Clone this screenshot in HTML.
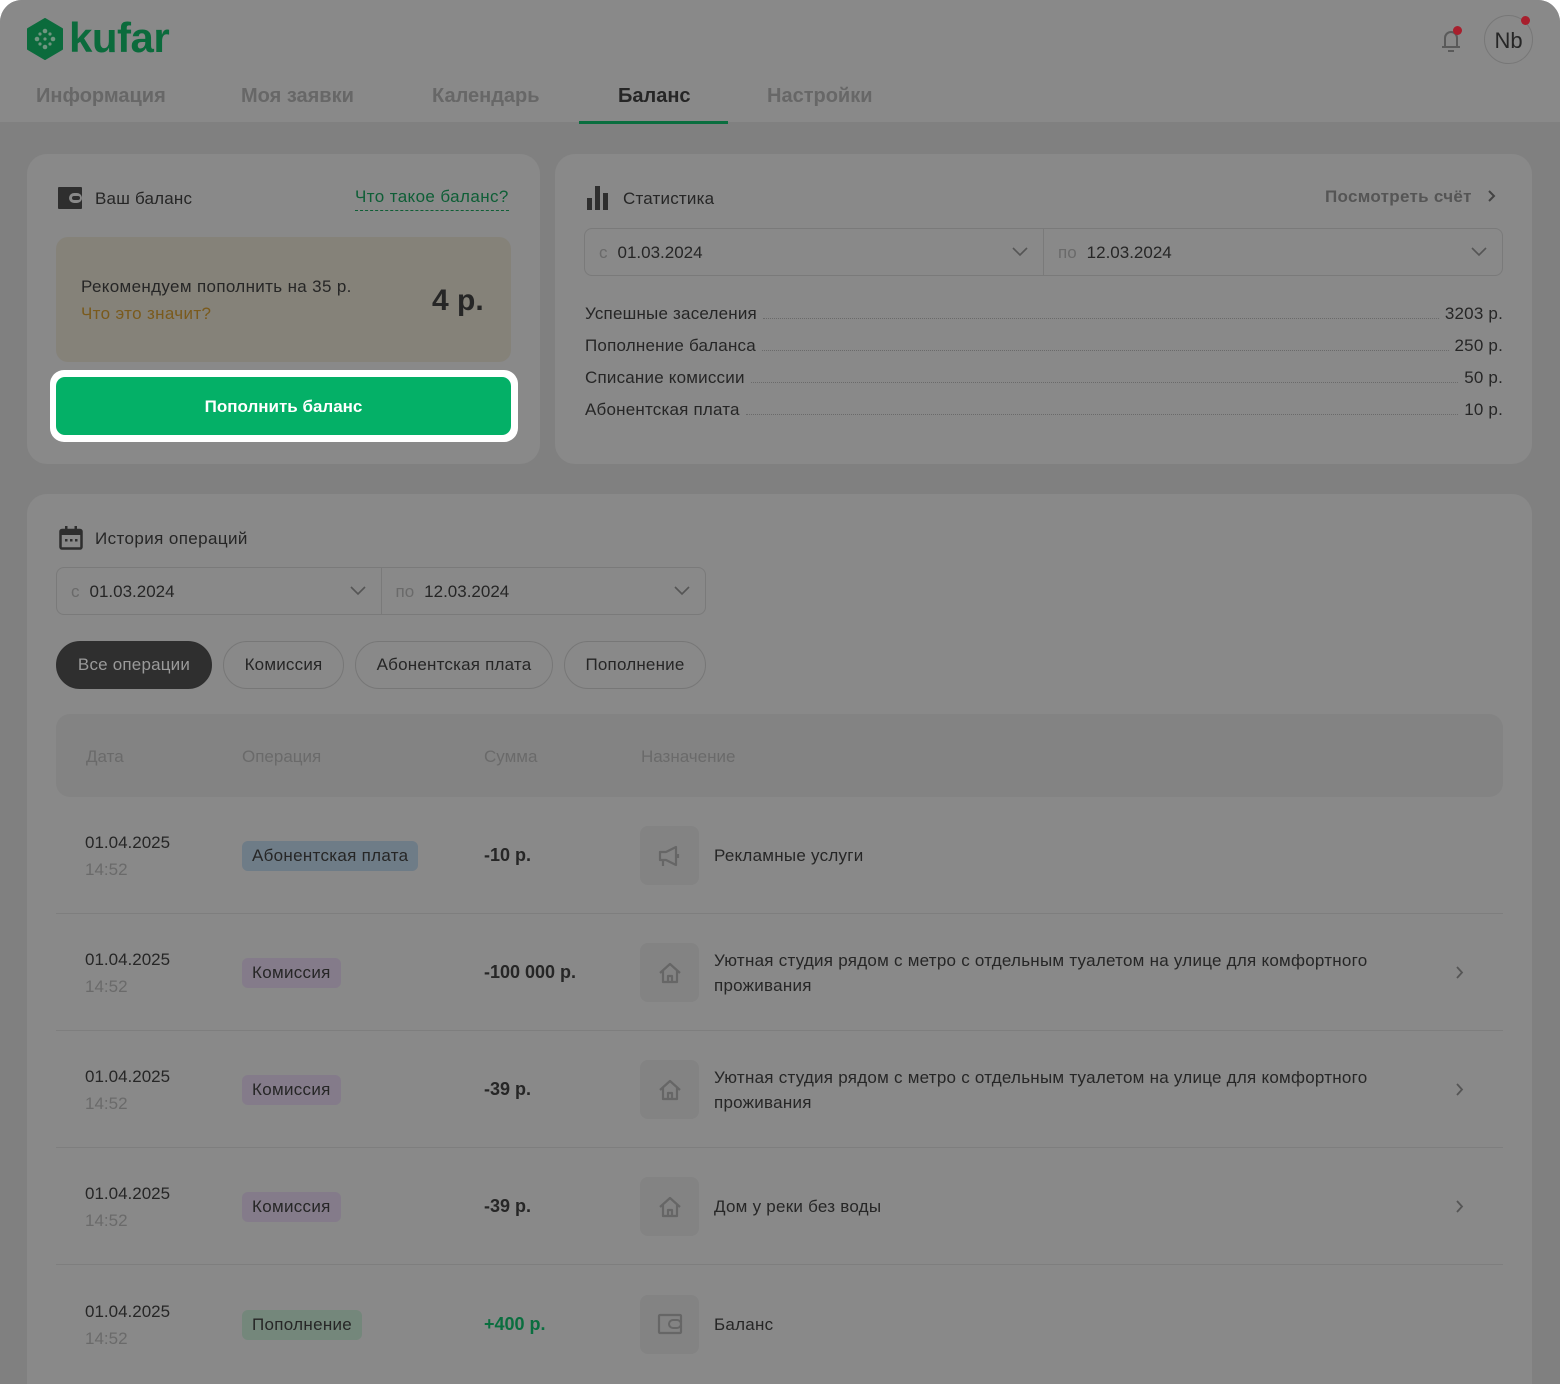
<!DOCTYPE html>
<html><head><meta charset="utf-8"><style>
*{box-sizing:border-box;margin:0;padding:0}
body{width:1560px;height:1384px;background:#fff;font-family:"Liberation Sans",sans-serif;color:#262626;overflow:hidden;position:relative}
.main{position:absolute;left:0;top:0;width:1560px;height:1384px;background:#808080;border-radius:22px 22px 0 0;overflow:hidden}
.hdr{position:absolute;left:0;top:0;width:1560px;height:122px;background:#898989}
.abs{position:absolute}
.tab{position:absolute;top:85px;font-size:20px;font-weight:bold;color:#676767}
.card{position:absolute;background:#898989;border-radius:20px}
.t17{font-size:17px;letter-spacing:0.2px}
.sel{position:absolute;height:48px;border:1px solid #7a7a7a;border-radius:8px;display:flex}
.sel div{flex:1;position:relative;display:flex;align-items:center;padding-left:14px;font-size:17px;padding-top:2px}
.sel div+div{border-left:1px solid #7a7a7a}
.sel span{color:#6a6a6a;margin-right:10px}
.chev{position:absolute;right:14px;top:17px}
.row{position:absolute;left:585px;width:918px;display:flex;font-size:17px;letter-spacing:0.2px}
.dots{flex:1;border-bottom:1px dotted #6a6a6a;margin:0 6px 5px}
.chip{position:absolute;top:641px;height:48px;border:1px solid #777;border-radius:24px;font-size:17px;display:flex;align-items:center;justify-content:center;letter-spacing:0.2px}
.th{position:absolute;top:747px;font-size:17px;color:#6a6a6a}
.tr{position:absolute;left:56px;width:1447px;height:117px;border-bottom:1px solid #7e7e7e}
.d{position:absolute;left:29px;font-size:17px;line-height:27px;top:calc(50% - 26px)}
.d span{color:#6a6a6a}
.badge{position:absolute;left:186px;top:calc(50% - 14px);height:30px;line-height:30px;padding:0 10px;border-radius:6px;font-size:17px;letter-spacing:0.3px}
.sum{position:absolute;left:428px;top:calc(50% - 10px);font-size:18px;font-weight:bold}
.ic{position:absolute;left:584px;top:calc(50% - 29px);width:59px;height:59px;background:#838383;border-radius:8px;display:flex;align-items:center;justify-content:center}
.txt{position:absolute;left:658px;width:720px;font-size:17px;line-height:25px;top:50%;transform:translateY(-48%);letter-spacing:0.25px}
.arr{position:absolute;right:38px;top:calc(50% - 7px)}
</style></head><body><div class="main">
<div class="hdr"></div>
<svg class="abs" style="left:25px;top:18px" width="40" height="42" viewBox="0 0 40 42"><path d="M20 1 L37 11 L37 31 L20 41 L3 31 L3 11Z" fill="#0b6b3c" stroke="#0b6b3c" stroke-width="2" stroke-linejoin="round"/><g fill="#6f9580"><circle cx="20" cy="13" r="2.3"/><circle cx="20" cy="29" r="2.3"/><circle cx="12" cy="21" r="2.3"/><circle cx="28" cy="21" r="2.3"/><circle cx="15" cy="16" r="1.6"/><circle cx="25" cy="16" r="1.6"/><circle cx="15" cy="26" r="1.6"/><circle cx="25" cy="26" r="1.6"/><circle cx="20" cy="21" r="1.6"/></g></svg>
<div class="abs" style="left:69px;top:14px;font-size:42px;font-weight:bold;color:#0b6b3c;letter-spacing:-0.5px;line-height:48px">kufar</div>
<svg class="abs" style="left:1437px;top:25px" width="28" height="30" viewBox="0 0 28 30"><path d="M5 22h18M8 22v-9a6 6 0 0 1 12 0v9M11 26h6" fill="none" stroke="#5a5a5a" stroke-width="2"/></svg>
<div class="abs" style="left:1453px;top:26px;width:9px;height:9px;border-radius:50%;background:#a81f2d"></div>
<div class="abs" style="left:1484px;top:15px;width:49px;height:49px;border-radius:50%;border:1px solid #777;font-size:22px;text-align:center;line-height:49px">Nb</div>
<div class="abs" style="left:1521px;top:16px;width:9px;height:9px;border-radius:50%;background:#a81f2d"></div>
<div class="tab" style="left:36px">Информация</div>
<div class="tab" style="left:241px">Моя заявки</div>
<div class="tab" style="left:432px">Календарь</div>
<div class="tab" style="left:618px;color:#262626">Баланс</div>
<div class="tab" style="left:767px">Настройки</div>
<div class="abs" style="left:579px;top:121px;width:149px;height:3px;background:#0a6e3f"></div>

<div class="card" style="left:27px;top:154px;width:513px;height:310px"></div>
<svg class="abs" style="left:58px;top:187px" width="26" height="22" viewBox="0 0 26 22"><rect x="0" y="0" width="24" height="22" rx="1" fill="#2e2e2e"/><rect x="11" y="6" width="13" height="10" rx="5" fill="#898989"/><rect x="14" y="9" width="8" height="4" rx="2" fill="#2e2e2e"/></svg>
<div class="abs t17" style="left:95px;top:189px">Ваш баланс</div>
<div class="abs t17" style="left:355px;top:187px;color:#0e5e36;border-bottom:1.5px dashed #0e5e36;padding-bottom:3px;letter-spacing:0.4px">Что такое баланс?</div>
<div class="abs" style="left:56px;top:237px;width:455px;height:125px;background:#858279;border-radius:12px"></div>
<div class="abs t17" style="left:81px;top:277px;letter-spacing:0.35px">Рекомендуем пополнить на 35 р.</div>
<div class="abs t17" style="left:81px;top:304px;color:#7a5a1c;letter-spacing:0.35px">Что это значит?</div>
<div class="abs" style="left:432px;top:284px;font-size:30px;font-weight:bold">4 р.</div>
<div class="abs" style="left:50px;top:370px;width:468px;height:72px;background:#fff;border-radius:14px"></div>
<div class="abs" style="left:56px;top:377px;width:455px;height:58px;background:#04b067;border-radius:9px;color:#fff;font-weight:bold;font-size:17px;text-align:center;line-height:60px">Пополнить баланс</div>

<div class="card" style="left:555px;top:154px;width:977px;height:310px"></div>
<svg class="abs" style="left:587px;top:186px" width="24" height="24" viewBox="0 0 24 24"><rect x="0" y="12" width="5" height="12" fill="#2e2e2e"/><rect x="8" y="0" width="5" height="24" fill="#2e2e2e"/><rect x="16" y="7" width="5" height="17" fill="#2e2e2e"/></svg>
<div class="abs t17" style="left:623px;top:189px">Статистика</div>
<div class="abs t17" style="left:1325px;top:187px;font-weight:bold;color:#555;letter-spacing:0.3px">Посмотреть счёт</div>
<svg class="abs" style="left:1487px;top:189px" width="10" height="14" viewBox="0 0 10 14"><path d="M2 2l5 5-5 5" fill="none" stroke="#444" stroke-width="2"/></svg>
<div class="sel" style="left:584px;top:228px;width:919px"><div><span>с</span>01.03.2024<svg class="chev" width="18" height="12" viewBox="0 0 18 12"><path d="M2 2l7 7 7-7" fill="none" stroke="#555" stroke-width="1.6"/></svg></div><div><span>по</span>12.03.2024<svg class="chev" width="18" height="12" viewBox="0 0 18 12"><path d="M2 2l7 7 7-7" fill="none" stroke="#555" stroke-width="1.6"/></svg></div></div>
<div class="row" style="top:304px"><span>Успешные заселения</span><span class="dots"></span><span>3203 р.</span></div>
<div class="row" style="top:336px"><span>Пополнение баланса</span><span class="dots"></span><span>250 р.</span></div>
<div class="row" style="top:368px"><span>Списание комиссии</span><span class="dots"></span><span>50 р.</span></div>
<div class="row" style="top:400px"><span>Абонентская плата</span><span class="dots"></span><span>10 р.</span></div>

<div class="card" style="left:27px;top:494px;width:1505px;height:920px"></div>
<svg class="abs" style="left:59px;top:526px" width="24" height="24" viewBox="0 0 24 24"><rect x="1.5" y="4" width="21" height="18.5" rx="1.5" fill="none" stroke="#2e2e2e" stroke-width="2.5"/><rect x="1.5" y="4" width="21" height="5" fill="#2e2e2e"/><rect x="6" y="0" width="2.5" height="6" fill="#2e2e2e"/><rect x="15.5" y="0" width="2.5" height="6" fill="#2e2e2e"/><rect x="6" y="13" width="2.5" height="2.5" fill="#2e2e2e"/><rect x="11" y="13" width="2.5" height="2.5" fill="#2e2e2e"/><rect x="16" y="13" width="2.5" height="2.5" fill="#2e2e2e"/></svg>
<div class="abs t17" style="left:95px;top:529px;letter-spacing:0.4px">История операций</div>
<div class="sel" style="left:56px;top:567px;width:650px"><div><span>с</span>01.03.2024<svg class="chev" width="18" height="12" viewBox="0 0 18 12"><path d="M2 2l7 7 7-7" fill="none" stroke="#555" stroke-width="1.6"/></svg></div><div><span>по</span>12.03.2024<svg class="chev" width="18" height="12" viewBox="0 0 18 12"><path d="M2 2l7 7 7-7" fill="none" stroke="#555" stroke-width="1.6"/></svg></div></div>
<div class="chip" style="left:56px;width:156px;background:#2f2f2f;border-color:#2f2f2f;color:#9a9a9a">Все операции</div>
<div class="chip" style="left:223px;width:121px">Комиссия</div>
<div class="chip" style="left:355px;width:198px">Абонентская плата</div>
<div class="chip" style="left:564px;width:142px">Пополнение</div>
<div class="abs" style="left:56px;top:714px;width:1447px;height:83px;background:#838383;border-radius:14px"></div>
<div class="th" style="left:86px">Дата</div><div class="th" style="left:242px">Операция</div><div class="th" style="left:484px">Сумма</div><div class="th" style="left:641px">Назначение</div>

<div class="tr" style="top:797px"><div class="d">01.04.2025<br><span>14:52</span></div><div class="badge" style="background:#6e7c87">Абонентская плата</div><div class="sum">-10 р.</div><div class="ic"><svg width="26" height="26" viewBox="0 0 26 26"><path d="M3 9h6l10-5v18l-10-5H3zM6 17v6M21 11v4" fill="none" stroke="#666" stroke-width="2.2" stroke-linejoin="round"/></svg></div><div class="txt">Рекламные услуги</div></div>
<div class="tr" style="top:914px"><div class="d">01.04.2025<br><span>14:52</span></div><div class="badge" style="background:#847b8a">Комиссия</div><div class="sum">-100 000 р.</div><div class="ic"><svg width="26" height="26" viewBox="0 0 26 26"><path d="M3 13L13 4l10 9M6 11v11h14V11M11 22v-6h4v6" fill="none" stroke="#666" stroke-width="2.2" stroke-linejoin="round"/></svg></div><div class="txt">Уютная студия рядом с метро с отдельным туалетом на улице для комфортного проживания</div><svg class="arr" width="10" height="15" viewBox="0 0 10 15"><path d="M2 2l5 5.5L2 13" fill="none" stroke="#555" stroke-width="1.8"/></svg></div>
<div class="tr" style="top:1031px"><div class="d">01.04.2025<br><span>14:52</span></div><div class="badge" style="background:#847b8a">Комиссия</div><div class="sum">-39 р.</div><div class="ic"><svg width="26" height="26" viewBox="0 0 26 26"><path d="M3 13L13 4l10 9M6 11v11h14V11M11 22v-6h4v6" fill="none" stroke="#666" stroke-width="2.2" stroke-linejoin="round"/></svg></div><div class="txt">Уютная студия рядом с метро с отдельным туалетом на улице для комфортного проживания</div><svg class="arr" width="10" height="15" viewBox="0 0 10 15"><path d="M2 2l5 5.5L2 13" fill="none" stroke="#555" stroke-width="1.8"/></svg></div>
<div class="tr" style="top:1148px"><div class="d">01.04.2025<br><span>14:52</span></div><div class="badge" style="background:#847b8a">Комиссия</div><div class="sum">-39 р.</div><div class="ic"><svg width="26" height="26" viewBox="0 0 26 26"><path d="M3 13L13 4l10 9M6 11v11h14V11M11 22v-6h4v6" fill="none" stroke="#666" stroke-width="2.2" stroke-linejoin="round"/></svg></div><div class="txt">Дом у реки без воды</div><svg class="arr" width="10" height="15" viewBox="0 0 10 15"><path d="M2 2l5 5.5L2 13" fill="none" stroke="#555" stroke-width="1.8"/></svg></div>
<div class="tr" style="top:1265px;border:none"><div class="d">01.04.2025<br><span>14:52</span></div><div class="badge" style="background:#74877b">Пополнение</div><div class="sum" style="color:#0a6e3f">+400 р.</div><div class="ic"><svg width="26" height="24" viewBox="0 0 26 24"><rect x="2" y="3" width="22" height="18" rx="1" fill="none" stroke="#666" stroke-width="2.2"/><rect x="12" y="8" width="12" height="8" rx="4" fill="none" stroke="#666" stroke-width="2"/></svg></div><div class="txt">Баланс</div></div>
</div></body></html>
